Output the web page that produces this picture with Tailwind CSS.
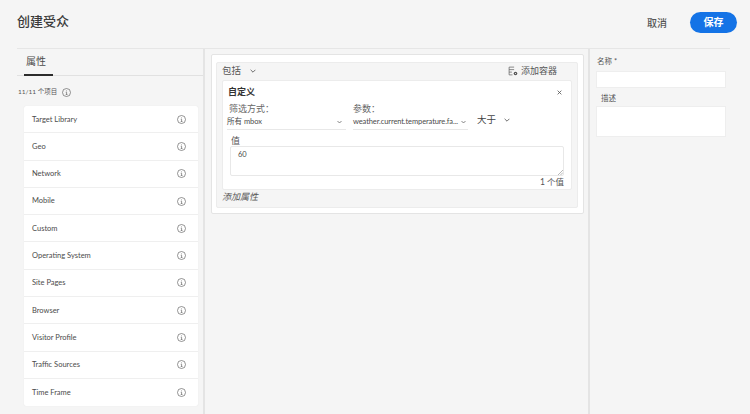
<!DOCTYPE html>
<html lang="zh">
  <head>
    <meta charset="utf-8" />
    <title>创建受众</title>
    <script src="https://cdn.jsdelivr.net/npm/@tailwindcss/browser@4"></script>
  </head>
  <body class="w-[750px] h-[414px] overflow-hidden bg-[#f5f5f5] text-[#4b4b4b] font-['Lato','Noto_Sans_CJK_SC',sans-serif]">
    <!-- Cabecera -->
    <header class="h-[48px] flex items-start justify-between pl-[17px] pr-[13px]">
      <h1 class="mt-[11px] text-[13px] leading-[20px] font-medium text-[#3a3a3a]">创建受众</h1>
      <div class="flex items-center mt-[12px] gap-[23px]">
        <span class="text-[10px] leading-[20px] font-medium text-[#555]">取消</span>
        <button class="w-[47px] h-[21px] rounded-full bg-[#1473e6] text-white text-[10px] leading-[18px] font-bold pb-[2px]">保存</button>
      </div>
    </header>

    <main class="flex h-[366px] border-t border-[#e6e6e6] ml-[17px] mr-[20px]">
      <!-- Atributos -->
      <section class="w-[188px] shrink-0 border-r-2 border-[#e4e4e4]">
        <div class="h-[27px] border-b border-[#e1e1e1] pl-[7px]">
          <div class="w-[29px] h-[27px] border-b-2 border-[#2c2c2c] pl-[2px] text-[10px] leading-[25px] text-[#4b4b4b]">属性</div>
        </div>
        <div class="flex items-center gap-[5px] mt-[9px] h-[14px] pl-[1px] text-[6.5px] text-[#555]">
          <span>11/11 个项目</span>
          <svg class="w-[9px] h-[9px]" viewBox="0 0 18 18" fill="none" stroke="#666" stroke-width="1.4"><circle cx="9" cy="9" r="8" /><path d="M9 5v1.5M7.5 8.5H9.2V13M7.5 13h3.4" /></svg>
        </div>
        <ul class="ml-[7px] mt-[7px] w-[174px] bg-white rounded-[2px] shadow-[0_0_1px_#ddd] text-[7.5px] text-[#4b4b4b]">
          <li class="h-[27.3px] flex items-center justify-between pl-[8px] pr-[12px] border-b border-[#efefef]">Target Library<svg class="w-[9px] h-[9px]" viewBox="0 0 18 18" fill="none" stroke="#666" stroke-width="1.4"><circle cx="9" cy="9" r="8" /><path d="M9 5v1.5M7.5 8.5H9.2V13M7.5 13h3.4" /></svg></li>
          <li class="h-[27.3px] flex items-center justify-between pl-[8px] pr-[12px] border-b border-[#efefef]">Geo<svg class="w-[9px] h-[9px]" viewBox="0 0 18 18" fill="none" stroke="#666" stroke-width="1.4"><circle cx="9" cy="9" r="8" /><path d="M9 5v1.5M7.5 8.5H9.2V13M7.5 13h3.4" /></svg></li>
          <li class="h-[27.3px] flex items-center justify-between pl-[8px] pr-[12px] border-b border-[#efefef]">Network<svg class="w-[9px] h-[9px]" viewBox="0 0 18 18" fill="none" stroke="#666" stroke-width="1.4"><circle cx="9" cy="9" r="8" /><path d="M9 5v1.5M7.5 8.5H9.2V13M7.5 13h3.4" /></svg></li>
          <li class="h-[27.3px] flex items-center justify-between pl-[8px] pr-[12px] border-b border-[#efefef]">Mobile<svg class="w-[9px] h-[9px]" viewBox="0 0 18 18" fill="none" stroke="#666" stroke-width="1.4"><circle cx="9" cy="9" r="8" /><path d="M9 5v1.5M7.5 8.5H9.2V13M7.5 13h3.4" /></svg></li>
          <li class="h-[27.3px] flex items-center justify-between pl-[8px] pr-[12px] border-b border-[#efefef]">Custom<svg class="w-[9px] h-[9px]" viewBox="0 0 18 18" fill="none" stroke="#666" stroke-width="1.4"><circle cx="9" cy="9" r="8" /><path d="M9 5v1.5M7.5 8.5H9.2V13M7.5 13h3.4" /></svg></li>
          <li class="h-[27.3px] flex items-center justify-between pl-[8px] pr-[12px] border-b border-[#efefef]">Operating System<svg class="w-[9px] h-[9px]" viewBox="0 0 18 18" fill="none" stroke="#666" stroke-width="1.4"><circle cx="9" cy="9" r="8" /><path d="M9 5v1.5M7.5 8.5H9.2V13M7.5 13h3.4" /></svg></li>
          <li class="h-[27.3px] flex items-center justify-between pl-[8px] pr-[12px] border-b border-[#efefef]">Site Pages<svg class="w-[9px] h-[9px]" viewBox="0 0 18 18" fill="none" stroke="#666" stroke-width="1.4"><circle cx="9" cy="9" r="8" /><path d="M9 5v1.5M7.5 8.5H9.2V13M7.5 13h3.4" /></svg></li>
          <li class="h-[27.3px] flex items-center justify-between pl-[8px] pr-[12px] border-b border-[#efefef]">Browser<svg class="w-[9px] h-[9px]" viewBox="0 0 18 18" fill="none" stroke="#666" stroke-width="1.4"><circle cx="9" cy="9" r="8" /><path d="M9 5v1.5M7.5 8.5H9.2V13M7.5 13h3.4" /></svg></li>
          <li class="h-[27.3px] flex items-center justify-between pl-[8px] pr-[12px] border-b border-[#efefef]">Visitor Profile<svg class="w-[9px] h-[9px]" viewBox="0 0 18 18" fill="none" stroke="#666" stroke-width="1.4"><circle cx="9" cy="9" r="8" /><path d="M9 5v1.5M7.5 8.5H9.2V13M7.5 13h3.4" /></svg></li>
          <li class="h-[27.3px] flex items-center justify-between pl-[8px] pr-[12px] border-b border-[#efefef]">Traffic Sources<svg class="w-[9px] h-[9px]" viewBox="0 0 18 18" fill="none" stroke="#666" stroke-width="1.4"><circle cx="9" cy="9" r="8" /><path d="M9 5v1.5M7.5 8.5H9.2V13M7.5 13h3.4" /></svg></li>
          <li class="h-[27.3px] flex items-center justify-between pl-[8px] pr-[12px]">Time Frame<svg class="w-[9px] h-[9px]" viewBox="0 0 18 18" fill="none" stroke="#666" stroke-width="1.4"><circle cx="9" cy="9" r="8" /><path d="M9 5v1.5M7.5 8.5H9.2V13M7.5 13h3.4" /></svg></li>
        </ul>
      </section>

      <!-- Editor -->
      <section class="w-[385px] shrink-0 border-r-2 border-[#e4e4e4] pl-[6px] pr-[4px] pt-[5px]">
        <div class="h-[160px] bg-white border border-[#e4e4e4] rounded-[2px] pt-[7px] pl-[4px] pr-[5px]">
          <div class="h-[146px] bg-[#f5f5f5] border border-[#ececec] rounded-[2px] px-[5px]">
            <div class="h-[17px] pb-[1px] flex items-center justify-between text-[9.5px] text-[#555]">
              <span class="flex items-center gap-[9px]">包括
                <svg class="w-[6px] h-[4px]" viewBox="0 0 10 6" fill="none" stroke="#555" stroke-width="1.4"><path d="M1 1l4 4 4-4" /></svg>
              </span>
              <span class="flex items-center gap-[3px] pr-[15px] text-[9px]">
                <svg class="w-[10px] h-[10px]" viewBox="0 0 18 18" fill="none" stroke="#555" stroke-width="1.2"><path d="M11 2H2v14h6M2 6.5h9M2 11h5" /><circle cx="13.5" cy="13.5" r="3.2" fill="#555" stroke="none" /><circle cx="13.5" cy="13.5" r="1" fill="#f5f5f5" stroke="none" /></svg>
                添加容器</span>
            </div>
            <div class="relative h-[110px] bg-white border border-[#ececec] rounded-[2px] px-[5px] pt-[5px]">
              <svg class="absolute right-[9px] top-[9px] w-[5px] h-[5px]" viewBox="0 0 8 8" stroke="#555" stroke-width="1.3"><path d="M1 1l6 6M7 1L1 7" /></svg>
              <div class="text-[9px] leading-[12px] font-bold text-[#333]">自定义</div>
              <div class="flex mt-[4px]">
                <div class="w-[118px]">
                  <div class="text-[9px] leading-[13px] text-[#666] pl-[1px]">筛选方式：</div>
                  <div class="h-[15px] flex items-center justify-between border-b border-[#e8e8e8] text-[7.5px] -ml-[1px] pr-[4px]">所有 mbox
                    <svg class="w-[5px] h-[4px]" viewBox="0 0 10 6" fill="none" stroke="#555" stroke-width="1.4"><path d="M1 1l4 4 4-4" /></svg>
                  </div>
                </div>
                <div class="w-[115px] ml-[7px]">
                  <div class="text-[9px] leading-[13px] text-[#666]">参数：</div>
                  <div class="h-[15px] flex items-center justify-between border-b border-[#e8e8e8] text-[7.5px] tracking-[-0.1px] pr-[2px]">weather.current.temperature.fa...
                    <svg class="w-[5px] h-[4px]" viewBox="0 0 10 6" fill="none" stroke="#555" stroke-width="1.4"><path d="M1 1l4 4 4-4" /></svg>
                  </div>
                </div>
                <div class="flex items-center gap-[8px] ml-[9px] mt-[11px] h-[14px] text-[9.5px] text-[#444]">大于
                  <svg class="w-[6px] h-[4px]" viewBox="0 0 10 6" fill="none" stroke="#555" stroke-width="1.4"><path d="M1 1l4 4 4-4" /></svg>
                </div>
              </div>
              <div class="text-[9px] leading-[11px] mt-[5px] ml-[3px] text-[#555]">值</div>
              <div class="relative ml-[2px] mr-[2px] h-[30px] border border-[#e8e8e8] rounded-[2px] text-[7.5px] leading-[10px] px-[7px] py-[3px]">60
                <svg class="absolute right-[0px] bottom-[0px] w-[5px] h-[5px]" viewBox="0 0 6 6" stroke="#aaa" stroke-width="1"><path d="M6 0L0 6M6 3L3 6" /></svg>
              </div>
              <div class="text-right text-[8.5px] leading-[12px] mr-[2px] text-[#555]">1 个值</div>
            </div>
            <div class="text-[9px] leading-[14px] italic text-[#555]">添加属性</div>
          </div>
        </div>
      </section>

      <!-- Nombre -->
      <aside class="flex-1 pl-[6px] pr-[4px]">
        <div class="text-[7.5px] leading-[10px] mt-[8px] pl-[1px] text-[#555]">名称 *</div>
        <div class="h-[17px] bg-white mt-[4px] border border-[#eee]"></div>
        <div class="text-[7.5px] leading-[10px] mt-[6px] ml-[5px] text-[#555]">描述</div>
        <div class="h-[31px] bg-white mt-[2px] border border-[#eee]"></div>
      </aside>
    </main>
  </body>
</html>
